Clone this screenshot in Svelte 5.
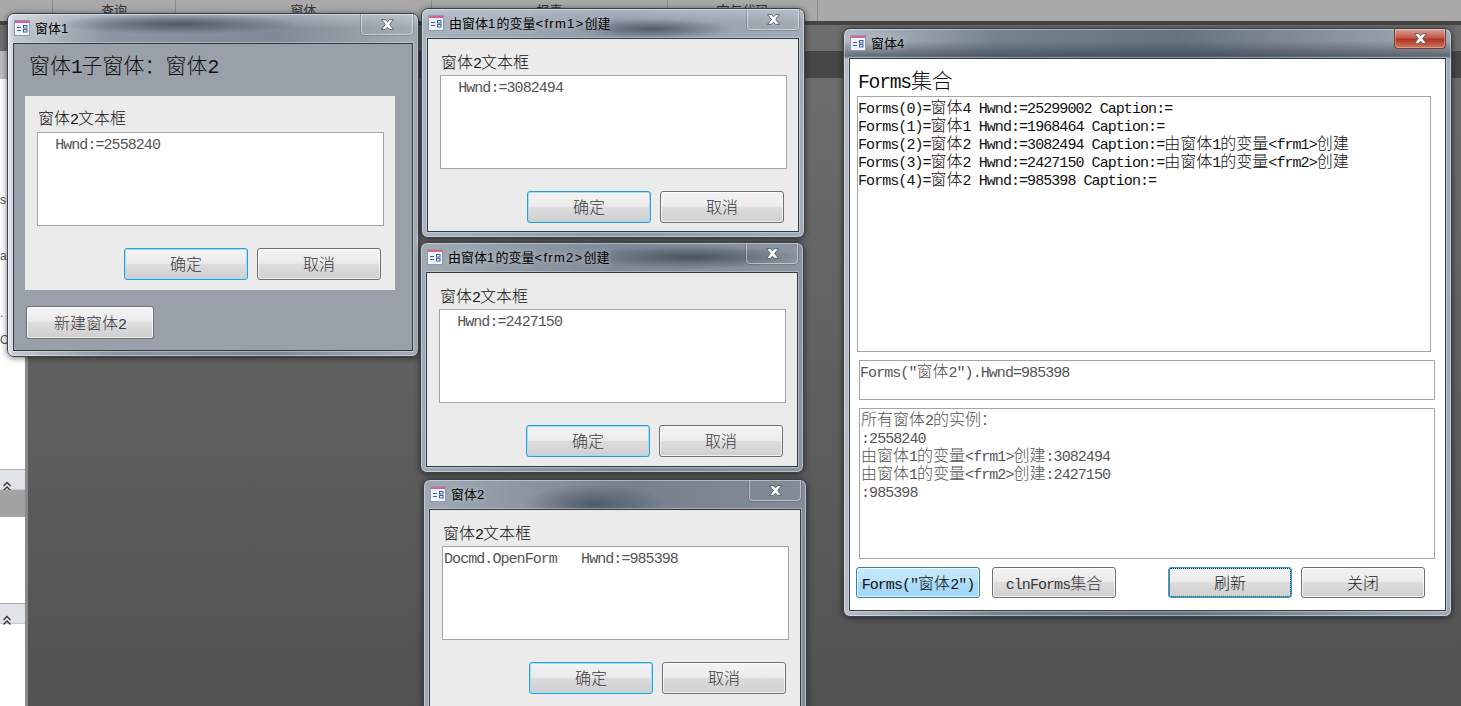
<script>
  const ribbonGroups = [
    { name: '查询', cls: 'g1' },
    { name: '窗体', cls: 'g2' },
    { name: '报表', cls: 'g3' },
    { name: '宏与代码', cls: 'g4' }
  ];

  const childWindows = [
    { cls: 'win2', title: '由窗体1的变量<frm1>创建', text: '  Hwnd:=3082494' },
    { cls: 'win3', title: '由窗体1的变量<frm2>创建', text: '  Hwnd:=2427150' },
    { cls: 'win4', title: '窗体2', text: 'Docmd.OpenForm   Hwnd:=985398' }
  ];

  const formsList = [
    'Forms(0)=窗体4 Hwnd:=25299002 Caption:=',
    'Forms(1)=窗体1 Hwnd:=1968464 Caption:=',
    'Forms(2)=窗体2 Hwnd:=3082494 Caption:=由窗体1的变量<frm1>创建',
    'Forms(3)=窗体2 Hwnd:=2427150 Caption:=由窗体1的变量<frm2>创建',
    'Forms(4)=窗体2 Hwnd:=985398 Caption:='
  ];

  const instances = [
    '所有窗体2的实例\uFF1A',
    ':2558240',
    '由窗体1的变量<frm1>创建:3082494',
    '由窗体1的变量<frm2>创建:2427150',
    ':985398'
  ];

  // latin runs get the mono face so they keep the half-width grid of the CJK runs
  function runs(text) {
    return text.match(/[\u3000-\u9fff\uff00-\uffef]+|[^\u3000-\u9fff\uff00-\uffef]+/g) || [];
  }
  const isCjk = (run) => /^[\u3000-\u9fff\uff00-\uffef]/.test(run);
</script>

{#snippet rich(text)}
  {#each runs(text) as run}<span class={isCjk(run) ? 'cjk' : 'lat'}>{run}</span>{/each}
{/snippet}

{#snippet formIcon()}
  <svg class="form-icon" width="16" height="16" viewBox="0 0 16 16">
    <rect x="0.5" y="0.5" width="15" height="15" fill="#eef2fa" stroke="#8f9ab0" />
    <rect x="1" y="1" width="14" height="2" fill="#d9608f" />
    <path d="M3 7.5h4M3 10.5h4" stroke="#3f5fa0" fill="none" />
    <rect x="9.5" y="5.5" width="3.5" height="2.5" fill="none" stroke="#3f5fa0" />
    <rect x="9.5" y="9.5" width="3.5" height="2.5" fill="none" stroke="#3f5fa0" />
  </svg>
{/snippet}

{#snippet chevrons()}
  <svg width="10" height="10" viewBox="0 0 10 10"><path d="M1.5 5L5 1.500 8.500 5M1.500 9.500L5 6 8.500 9.500" fill="none" stroke="#333" stroke-width="1.300" /></svg>
{/snippet}

{#snippet titleBar(title, active)}
  <div class="titlebar">
    {@render formIcon()}
    <span class="title">{@render rich(title)}</span>
    <div class="close" class:active>
      <svg width="13" height="11" viewBox="0 0 12 10">
        <polygon points="0.5,0.5 4,0.5 6,2.5 8,0.5 11.500,0.5 8,5 11.500,9.500 8,9.500 6,7.500 4,9.500 0.5,9.500 4,5" fill="#fff" stroke="#4a5561" stroke-width="0.8" />
      </svg>
    </div>
  </div>
{/snippet}

{#snippet formBody(text)}
  <div class="form-label">{@render rich('窗体2文本框')}</div>
  <div class="box form-box">{@render rich(text)}</div>
  <div class="form-actions">
    <button class="btn default">{@render rich('确定')}</button>
    <button class="btn">{@render rich('取消')}</button>
  </div>
{/snippet}

<div class="desk" lang="zh-CN">
  <div class="ribbon">
    {#each ribbonGroups as group}
      <div class="group {group.cls}">{group.name}</div>
    {/each}
  </div>
  <div class="ribbon-line"></div>

  <div class="work">
    <aside class="nav">
      <div class="nav-top"></div>
      <div class="nav-light"></div>
      <div class="nav-list">
        <span class="frag f1">s</span>
        <span class="frag f2">a</span>
        <span class="frag f3">.</span>
        <span class="frag f4">O</span>
      </div>
      <div class="nav-head">{@render chevrons()}</div>
      <div class="nav-selected"></div>
      <div class="nav-gap"></div>
      <div class="nav-head">{@render chevrons()}</div>
      <div class="nav-rest"></div>
    </aside>
    <main class="mdi">
      <div class="mdi-top"></div>
      <div class="mdi-band"></div>
      <div class="mdi-main"></div>
    </main>
  </div>

  <!-- 窗体1 with its subform -->
  <section class="win win1">
    {@render titleBar('窗体1', false)}
    <div class="client dim">
      <div class="heading h1">{@render rich('窗体1子窗体\uFF1A窗体2')}</div>
      <div class="subform">
        {@render formBody('  Hwnd:=2558240')}
      </div>
      <button class="btn new">{@render rich('新建窗体2')}</button>
    </div>
  </section>

  {#each childWindows as win}
    <section class="win {win.cls}">
      {@render titleBar(win.title, false)}
      <div class="client">
        {@render formBody(win.text)}
      </div>
    </section>
  {/each}

  <!-- 窗体4, the active one -->
  <section class="win win5">
    {@render titleBar('窗体4', true)}
    <div class="client white">
      <div class="heading h5">{@render rich('Forms集合')}</div>
      <div class="box list-box">
        {#each formsList as line}
          <div>{@render rich(line)}</div>
        {/each}
      </div>
      <div class="box hwnd-box">{@render rich('Forms("窗体2").Hwnd=985398')}</div>
      <div class="box inst-box">
        {#each instances as line}
          <div>{@render rich(line)}</div>
        {/each}
      </div>
      <div class="actions5">
        <button class="btn small hot">{@render rich('Forms("窗体2")')}</button>
        <button class="btn small">{@render rich('clnForms集合')}</button>
        <button class="btn small default focus">{@render rich('刷新')}</button>
        <button class="btn small">{@render rich('关闭')}</button>
      </div>
    </div>
  </section>
</div>

<style>
  :global(body) {
    margin: 0;
  }
  .desk {
    position: relative;
    width: 1461px;
    height: 706px;
    overflow: hidden;
    display: flex;
    flex-direction: column;
    font-family: "Noto Sans CJK SC", sans-serif;
    background: #555;
  }

  /* ribbon remains */
  .ribbon {
    display: flex;
    height: 21px;
    padding-left: 52px;
    background: #a9a9a9;
    color: #333;
    font-size: 13px;
    line-height: 20px;
    flex-shrink: 0;
  }
  .group {
    box-sizing: border-box;
    text-align: center;
    border-left: 1px solid #8a8a8a;
  }
  .g1 { width: 123px; }
  .g2 { width: 256px; }
  .g3 { width: 236px; }
  .g4 { width: 151px; border-right: 1px solid #8a8a8a; }
  .ribbon-line {
    height: 4px;
    background: #444;
    flex-shrink: 0;
  }
  .work {
    flex: 1;
    display: flex;
    min-height: 0;
  }

  /* navigation pane, mostly hidden behind the windows */
  .nav {
    width: 25px;
    display: flex;
    flex-direction: column;
    background: #fff;
    flex-shrink: 0;
  }
  .nav-top { height: 26px; background: #6e6e6e; }
  .nav-light { height: 28px; background: #bdbdbd; }
  .nav-list {
    height: 390px;
    position: relative;
    font: 12px "Liberation Sans", sans-serif;
    color: #555;
  }
  .frag { position: absolute; left: 0; }
  .f1 { top: 114px; }
  .f2 { top: 170px; }
  .f3 { top: 227px; }
  .f4 { top: 254px; }
  .nav-head {
    box-sizing: border-box;
    height: 21px;
    padding: 2px 0 0 2px;
    background: #e0e3e7;
    border-top: 1px solid #aeaeae;
    border-bottom: 1px solid #c9c9c9;
  }
  .nav-selected { height: 27px; background: #a3a3a3; }
  .nav-gap { height: 86px; }
  .nav-rest { flex: 1; }

  .mdi {
    flex: 1;
    display: flex;
    flex-direction: column;
    border-left: 3px solid #8a8a8a;
    box-shadow: inset 2px 0 0 #555;
  }
  .mdi-top { height: 26px; background: #6e6e6e; }
  .mdi-band { height: 27px; background: #474747; }
  .mdi-main {
    flex: 1;
    background: linear-gradient(#6d6d6d, #525252);
  }

  /* windows float on the desktop */
  .win {
    position: absolute;
    box-sizing: border-box;
    display: flex;
    flex-direction: column;
    border: 1px solid #39434d;
    border-radius: 7px;
    box-shadow: inset 0 0 0 1px rgba(255, 255, 255, 0.4), 0 1px 6px rgba(0, 0, 0, 0.55);
  }
  .win1 {
    left: 7px;
    top: 13px;
    width: 412px;
    height: 344px;
    background:
      linear-gradient(90deg, rgba(255, 255, 255, 0.6), rgba(255, 255, 255, 0) 6px),
      radial-gradient(ellipse 120px 10px at 170px 10px, rgba(70, 82, 95, 0.9), rgba(70, 82, 95, 0)),
      linear-gradient(rgba(255, 255, 255, 0.3), rgba(255, 255, 255, 0) 14px),
      linear-gradient(90deg, #c3cbd4, #8b96a2 25%, #7f8a96 65%, #a4adb7);
  }
  .win2 {
    left: 421px;
    top: 8px;
    width: 384px;
    height: 230px;
    background:
      radial-gradient(ellipse 80px 10px at 230px 20px, rgba(70, 82, 95, 0.85), rgba(70, 82, 95, 0)),
      linear-gradient(rgba(255, 255, 255, 0.25), rgba(255, 255, 255, 0) 14px),
      linear-gradient(90deg, #a9b3be, #8f9aa6 50%, #a2acb6);
  }
  .win3 {
    left: 420px;
    top: 242px;
    width: 384px;
    height: 231px;
    background:
      radial-gradient(ellipse 110px 12px at 270px 14px, rgba(60, 72, 85, 0.85), rgba(60, 72, 85, 0)),
      linear-gradient(90deg, #a0aab5, #7f8a96 50%, #8a95a0);
  }
  .win4 {
    left: 423px;
    top: 479px;
    width: 384px;
    height: 260px;
    background:
      radial-gradient(ellipse 70px 20px at 170px 24px, rgba(60, 72, 85, 0.7), rgba(60, 72, 85, 0)),
      linear-gradient(90deg, #a0a9b3, #76818d 55%, #838d98);
  }
  .win5 {
    left: 843px;
    top: 28px;
    width: 609px;
    height: 589px;
    background:
      linear-gradient(rgba(60, 72, 85, 0) 12px, rgba(50, 60, 72, 0.6) 27px, rgba(50, 60, 72, 0) 30px),
      linear-gradient(90deg, #b4bcc6, #76838f 25%, #66737f 55%, #a2abb5);
  }

  .titlebar {
    box-sizing: border-box;
    display: flex;
    align-items: center;
    height: 29px;
    padding: 0 0 2px 6px;
    flex-shrink: 0;
  }
  .form-icon { flex-shrink: 0; }
  .title {
    margin-left: 5px;
    font-size: 13px;
    color: #000;
    text-shadow: 0 0 6px rgba(255, 255, 255, 0.55);
    white-space: nowrap;
  }
  .title .cjk {
    font-weight: 400;
  }
  .title .lat {
    font-family: "Liberation Sans", sans-serif;
    font-size: 13px;
    letter-spacing: 1.3px;
  }
  .close {
    box-sizing: border-box;
    align-self: flex-start;
    width: 52px;
    height: 21px;
    margin-left: auto;
    margin-right: 5px;
    display: flex;
    align-items: center;
    justify-content: center;
    border: 1px solid rgba(255, 255, 255, 0.45);
    border-top: none;
    border-radius: 0 0 4px 4px;
    box-shadow: 0 0 0 1px rgba(50, 60, 70, 0.25);
  }
  .close.active {
    height: 20px;
    border-color: #7a3a34;
    background: linear-gradient(#dba297, #c4594a 45%, #b03420 55%, #cf7a60);
    box-shadow: inset 0 0 0 1px rgba(255, 255, 255, 0.3);
  }

  .client {
    flex: 1;
    min-height: 0;
    margin: 0 5px 5px;
    border: 1px solid #2f3a45;
    box-shadow: 0 0 0 1px rgba(255, 255, 255, 0.3);
    background: #ebebeb;
    padding: 12px 14px 0;
  }
  .client.dim {
    background: #9aa0aa;
    padding: 7px 0 0;
  }
  .client.white {
    background: #fff;
    padding: 7px 0 0;
  }

  /* zero line-height so mixed faces don't push the line box past 18px */
  .cjk {
    font-family: "Noto Sans CJK SC", sans-serif;
    font-weight: 300;
    line-height: 0;
  }
  .lat {
    font-family: "Liberation Mono", monospace;
    font-size: 0.9375em;
    letter-spacing: -0.0625em;
    white-space: pre;
    line-height: 0;
  }

  .heading {
    height: 30px;
    line-height: 26px;
    font-size: 21px;
    color: #111;
    white-space: nowrap;
  }
  .h1 {
    margin: 0 0 15px 15px;
  }
  .h5 {
    margin-left: 8px;
  }
  .subform {
    box-sizing: border-box;
    width: 370px;
    height: 194px;
    margin-left: 11px;
    padding: 11px 14px 0;
    background: #ebebeb;
  }
  .subform .form-label {
    margin-bottom: 5px;
  }
  .form-label {
    height: 20px;
    line-height: 20px;
    margin: 0 0 4px -1px;
    font-size: 16px;
    color: #111;
  }
  .box {
    box-sizing: border-box;
    background: #fff;
    border: 1px solid #a5a5a5;
    font-size: 16px;
    line-height: 18px;
    white-space: pre;
    overflow: hidden;
  }
  .form-box {
    width: 347px;
    height: 94px;
    margin-left: -2px;
    padding: 0 1px;
    color: #555;
  }
  .form-actions {
    display: flex;
    justify-content: flex-end;
    gap: 9px;
    margin-top: 22px;
  }

  .btn {
    box-sizing: border-box;
    width: 124px;
    height: 32px;
    padding: 0 0 2px;
    font-family: inherit;
    font-size: 16px;
    line-height: 1;
    color: #3a3a3a;
    border: 1px solid #707070;
    border-radius: 3px;
    background: linear-gradient(#f3f3f3, #ebebeb 48%, #dddddd 50%, #cfcfcf);
    box-shadow: inset 0 0 0 1px rgba(255, 255, 255, 0.7);
    white-space: nowrap;
  }
  .btn.default {
    border-color: #2a9fd6;
    box-shadow: inset 0 0 0 1px #a6dcf3;
  }
  .btn.new {
    display: block;
    width: 128px;
    height: 33px;
    margin: 16px 0 0 12px;
  }
  .btn.small {
    height: 31px;
  }
  .btn.hot {
    color: #111;
    border-color: #3c7fb1;
    background: linear-gradient(#c6e8fa, #bbe3f9 48%, #a9daf7 50%, #a2d6f5);
  }
  .btn.focus {
    color: #222;
    outline: 1px dotted #222;
    outline-offset: -2px;
  }

  .list-box {
    width: 574px;
    height: 256px;
    margin-left: 7px;
    padding: 0;
    color: #111;
  }
  .hwnd-box {
    width: 576px;
    height: 40px;
    margin: 8px 0 0 9px;
    padding: 0;
    color: #555;
  }
  .inst-box {
    width: 576px;
    height: 151px;
    margin: 8px 0 0 9px;
    padding: 0 1px;
    color: #555;
  }
  .actions5 {
    display: flex;
    gap: 12px;
    margin: 8px 0 0 6px;
  }
  .actions5 .focus {
    margin-left: 40px;
  }
  .actions5 .focus + .btn {
    margin-left: -3px;
    color: #222;
  }
</style>
